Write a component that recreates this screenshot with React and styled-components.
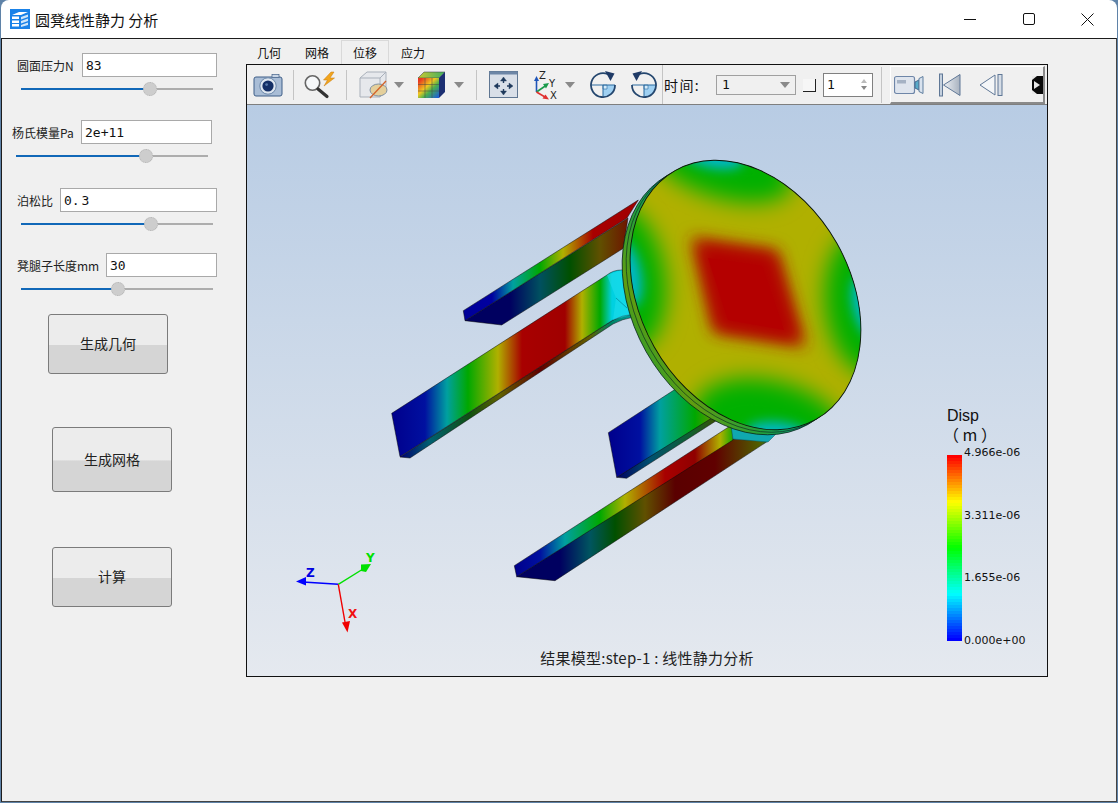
import React from "react";
import styled, { createGlobalStyle } from "styled-components";

const Global = createGlobalStyle`
  html, body { margin: 0; padding: 0; background: #5f83a8; }
  body { font-family: "Noto Sans CJK SC", "Noto Sans", sans-serif; }
`;

const Win = styled.div`
  box-sizing: border-box;
  width: 1118px;
  height: 803px;
  display: flex;
  flex-direction: column;
  padding: 0 1px 1px;
  background: #5f83a8;
`;

const TitleBar = styled.div`
  height: 38px;
  flex: none;
  display: flex;
  align-items: center;
  padding-left: 9px;
  background: #fff;
  border-radius: 8px 8px 0 0;
`;

const Title = styled.div`
  margin-left: 5px;
  font-size: 15px;
  color: #111;
  white-space: pre;
`;

const WinButtons = styled.div`
  margin-left: auto;
  display: flex;
`;

const WinButton = styled.div`
  width: 59px;
  height: 38px;
  display: flex;
  align-items: center;
  justify-content: center;
`;

const Body = styled.div`
  flex: 1;
  display: flex;
  background: #f0f0f0;
  border: 1px solid #1c1c1c;
  border-bottom-color: #444;
  border-right-color: #444;
`;

const Side = styled.div`
  width: 243px;
  flex: none;
  display: flex;
  flex-direction: column;
  padding-top: 14px;
`;

const Param = styled.div`
  width: 200px;
  margin-left: ${(p) => p.$left}px;
  margin-top: ${(p) => p.$top}px;
`;

const ParamRow = styled.div`
  display: flex;
  align-items: center;
  justify-content: space-between;
  height: 24px;
`;

const ParamLabel = styled.div`
  font-size: 12px;
  color: #222;
  white-space: nowrap;
`;

const Field = styled.div`
  box-sizing: border-box;
  width: ${(p) => p.$w}px;
  height: 24px;
  background: #fff;
  border: 1px solid #a9a9a9;
  padding-left: 3px;
  font: 13px/24px "DejaVu Sans Mono", "Liberation Mono", monospace;
  word-spacing: -6px;
  color: #111;
  white-space: pre;
`;

const SliderWrap = styled.div`
  position: relative;
  height: 14px;
  margin: 5px 4px 0;
`;

const Track = styled.div`
  position: absolute;
  left: 0;
  right: 0;
  top: 6px;
  height: 2px;
  background: #adadad;
`;

const TrackFill = styled.div`
  height: 2px;
  background: #1168b8;
`;

const Thumb = styled.div`
  position: absolute;
  top: 0;
  width: 14px;
  height: 14px;
  margin-left: -7px;
  box-sizing: border-box;
  border-radius: 50%;
  background: #cdcdcd;
  border: 1px dotted #b4b4b4;
`;

const ActionButton = styled.div`
  box-sizing: border-box;
  width: 120px;
  height: ${(p) => p.$h}px;
  margin-left: ${(p) => p.$left}px;
  margin-top: ${(p) => p.$top}px;
  padding-bottom: 2px;
  flex: none;
  display: flex;
  align-items: center;
  justify-content: center;
  border: 1px solid #7b7b7b;
  border-radius: 3px;
  background: linear-gradient(#ececec 0, #ececec 51%, #d5d5d5 52%, #d5d5d5 100%);
  font-size: 14px;
  color: #222;
`;

const Main = styled.div`
  flex: 1;
  display: flex;
  flex-direction: column;
  padding-top: 1px;
`;

const Tabs = styled.div`
  display: flex;
  height: 24px;
`;

const Tab = styled.div`
  box-sizing: border-box;
  width: 48px;
  height: 24px;
  font-size: 12px;
  line-height: 23px;
  text-align: center;
  color: #111;
  border: 1px solid ${(p) => (p.$active ? "#d9d9d9" : "transparent")};
  border-bottom: none;
`;

const Frame = styled.div`
  box-sizing: border-box;
  width: 802px;
  height: 613px;
  margin-left: 1px;
  border: 1px solid #111;
  display: flex;
  flex-direction: column;
`;

const Toolbar = styled.div`
  box-sizing: border-box;
  height: 40px;
  flex: none;
  display: flex;
  align-items: center;
  background: #f0f0f0;
  border-bottom: 1px solid #7f7f7f;
  overflow: hidden;
`;

const ToolIcon = styled.svg`
  flex: none;
  display: block;
  margin-left: ${(p) => p.$ml || 0}px;
`;

const Sep = styled.div`
  flex: none;
  width: 1px;
  height: ${(p) => p.$h || 30}px;
  margin-left: ${(p) => p.$ml}px;
  background: #c4c4c4;
`;

const Caret = styled.div`
  flex: none;
  margin-left: ${(p) => p.$ml}px;
  width: 0;
  height: 0;
  border-left: 5px solid transparent;
  border-right: 5px solid transparent;
  border-top: 6px solid #8a8a8a;
`;

const TimeLabel = styled.div`
  flex: none;
  width: 36px;
  margin-left: 1px;
  font-size: 14px;
  letter-spacing: 1.4px;
  white-space: nowrap;
  color: #111;
`;

const Combo = styled.div`
  box-sizing: border-box;
  flex: none;
  width: 80px;
  height: 20px;
  margin-left: 16px;
  padding: 0 5px;
  display: flex;
  align-items: center;
  justify-content: space-between;
  border: 1px solid #a0a0a0;
  font: 13px "DejaVu Sans Mono", monospace;
  color: #111;
`;

const Check = styled.div`
  box-sizing: border-box;
  flex: none;
  width: 13px;
  height: 13px;
  margin-left: 7px;
  margin-top: 2px;
  background: #f6f6f6;
  border-right: 1px solid #222;
  border-bottom: 1px solid #222;
`;

const Spin = styled.div`
  box-sizing: border-box;
  flex: none;
  width: 50px;
  height: 24px;
  margin-left: 7px;
  padding: 0 5px 0 3px;
  display: flex;
  align-items: center;
  justify-content: space-between;
  background: #fff;
  border: 1px solid #808080;
  font: 13px "DejaVu Sans Mono", monospace;
  color: #111;
`;

const SpinArrows = styled.div`
  display: flex;
  flex-direction: column;
  gap: 3px;
`;

const SpinArrow = styled.div`
  width: 0;
  height: 0;
  border-left: 3px solid transparent;
  border-right: 3px solid transparent;
  border-${(p) => (p.$down ? "top" : "bottom")}: 4px solid ${(p) => (p.$down ? "#888" : "#bbb")};
`;

const PlayerBar = styled.div`
  box-sizing: border-box;
  flex: none;
  align-self: flex-start;
  display: flex;
  align-items: center;
  width: 155px;
  height: 38px;
  margin-left: 8px;
  margin-top: 1px;
  border-top: 1px solid #fff;
  border-left: 1px solid #fff;
  border-right: 2px solid #8a8a8a;
  border-bottom: 2px solid #8a8a8a;
  overflow: hidden;
`;

const Canvas = styled.div`
  position: relative;
  flex: 1;
  overflow: hidden;
  background: linear-gradient(#b8cce4, #e5e9ef);
`;

const Scene = styled.svg`
  display: block;
  width: 800px;
  height: 571px;
`;

const Legend = styled.div`
  position: absolute;
  left: 700px;
  top: 302px;
  color: #111;
`;

const LegendTitle = styled.div`
  font: 16px/18px "Liberation Sans", "Noto Sans CJK SC", sans-serif;
  white-space: pre;
`;

const LegendUnit = styled(LegendTitle)`
  margin-left: -4px;
  font-family: "Noto Sans CJK SC", sans-serif;
`;

const LegendBody = styled.div`
  display: flex;
  margin-top: 12px;
`;

const ColorBar = styled.div`
  width: 15px;
  height: 186px;
`;

const Ticks = styled.div`
  margin: -9px 0 -7px 2px;
  display: flex;
  flex-direction: column;
  justify-content: space-between;
`;

const Tick = styled.div`
  font: 11px/14px "DejaVu Sans", sans-serif;
`;

const Caption = styled.div`
  position: absolute;
  left: 0;
  right: 0;
  bottom: 8px;
  font-size: 15px;
  letter-spacing: 0.25px;
  line-height: 20px;
  text-align: center;
  color: #222;
`;

// 颜色条 blue -> cyan -> green -> yellow -> red, banded like the vtk lookup table
function bandColor(t) {
  const hue = (1 - t) * 240;
  return `hsl(${hue} 100% 50%)`;
}

function colorBarCss() {
  const n = 62;
  const parts = [];
  for (let i = 0; i < n; i++) {
    const c = bandColor(1 - i / (n - 1));
    parts.push(`${c} ${(i / n) * 100}% ${((i + 1) / n) * 100}%`);
  }
  return `linear-gradient(${parts.join(",")})`;
}

const BLUE = "#00008c";
const TEAL = "#00a0a0";
const GREEN = "#00a800";
const OLIVE = "#b0b000";
const RED = "#a80000";

function Grad({ id, x1, x2, stops }) {
  return (
    <linearGradient id={id} gradientUnits="userSpaceOnUse" x1={x1} y1={0} x2={x2} y2={0}>
      {stops.map(([x, c]) => (
        <stop key={x} offset={(x - x1) / (x2 - x1)} stopColor={c} />
      ))}
    </linearGradient>
  );
}

const FACE = { cx: 745.5, cy: 295, rx: 143, ry: 105, transform: "rotate(60.5 745.5 295)" };

const SceneText = styled.text`
  font: bold 12px "DejaVu Sans", sans-serif;
`;

function StoolModel() {
  return (
    <g>
      <defs>
        <Grad id="l1top" x1={463} x2={640} stops={[[463, "#000098"], [492, "#0000a0"], [513, TEAL], [540, GREEN], [563, OLIVE], [593, RED], [640, "#a00000"]]} />
        <Grad id="l1side" x1={465} x2={630} stops={[[465, "#000060"], [510, "#000060"], [540, "#005060"], [570, "#005000"], [600, "#605000"], [630, "#701000"]]} />
        <Grad id="l2top" x1={392} x2={632} stops={[[392, BLUE], [425, "#0010a0"], [447, TEAL], [468, GREEN], [498, OLIVE], [522, RED], [565, "#a00000"], [582, OLIVE], [600, GREEN], [612, "#00d0e0"], [632, "#00d8e8"]]} />
        <Grad id="l2side" x1={400} x2={632} stops={[[400, "#000070"], [430, "#006070"], [470, "#105010"], [500, "#606000"], [540, "#600000"], [590, "#606000"], [610, "#008060"], [632, "#00a0a0"]]} />
        <Grad id="l3top" x1={608} x2={720} stops={[[608, BLUE], [640, "#0010a0"], [660, TEAL], [695, GREEN], [720, "#809000"]]} />
        <Grad id="l3side" x1={617} x2={720} stops={[[617, "#000060"], [650, "#005070"], [690, "#106030"], [720, "#405000"]]} />
        <Grad id="l4top" x1={515} x2={735} stops={[[515, BLUE], [540, "#0010a0"], [565, TEAL], [600, GREEN], [625, OLIVE], [665, RED], [695, "#900000"], [720, OLIVE], [735, GREEN]]} />
        <Grad id="l4side" x1={517} x2={775} stops={[[517, "#000060"], [560, "#000060"], [590, "#005560"], [615, "#005000"], [645, "#605000"], [675, "#5a0000"], [715, "#600000"], [760, "#506000"], [775, "#008060"]]} />
        <linearGradient id="rim" gradientUnits="userSpaceOnUse" x1="0" y1="170" x2="0" y2="440">
          <stop offset="0" stopColor="#40902c" />
          <stop offset="0.2" stopColor="#089078" />
          <stop offset="0.42" stopColor="#009898" />
          <stop offset="0.62" stopColor="#20a040" />
          <stop offset="0.8" stopColor="#609c10" />
          <stop offset="0.92" stopColor="#10a040" />
          <stop offset="1" stopColor="#00a8a8" />
        </linearGradient>
        <clipPath id="faceClip">
          <ellipse {...FACE} />
        </clipPath>
        <filter id="blurWide" x="-50%" y="-50%" width="200%" height="200%">
          <feGaussianBlur stdDeviation="11" />
        </filter>
        <filter id="blurRed" x="-40%" y="-40%" width="180%" height="180%">
          <feGaussianBlur stdDeviation="8" />
        </filter>
        <filter id="blurThin" x="-80%" y="-80%" width="260%" height="260%">
          <feGaussianBlur stdDeviation="6" />
        </filter>
      </defs>

      {/* back leg */}
      <polygon points="465,320.7 501.7,325 623.3,248.3 628,218" fill="url(#l1side)" stroke="#0a0a0a" strokeWidth="0.5" />
      <polygon points="463.3,310.7 465,320.7 627,218 638.3,200" fill="url(#l1top)" stroke="#0a0a0a" strokeWidth="0.5" />

      {/* lower leg */}
      <polygon points="516.7,576.7 555,580.7 768,441 733,439" fill="url(#l4side)" stroke="#0a0a0a" strokeWidth="0.5" />
      <polygon points="514.3,565.7 516.7,576.7 733,440 731.7,425" fill="url(#l4top)" stroke="#0a0a0a" strokeWidth="0.5" />
      <polygon points="731,425 745,424 777,433 768,442 733,439" fill="#10a8b0" stroke="#0a5a60" strokeWidth="0.5" />

      {/* middle leg */}
      <polygon points="616.7,477.3 626.7,478.3 720,418.3 715,413" fill="url(#l3side)" stroke="#0a0a0a" strokeWidth="0.5" />
      <polygon points="608.3,432.7 616.7,477.3 716.7,415 676.7,388.3" fill="url(#l3top)" stroke="#0a0a0a" strokeWidth="0.5" />

      {/* front leg */}
      <path d="M400 457 L410 458 L613 324 Q622 319 634 317 L634 314 Q622 315 613 320 Z" fill="url(#l2side)" stroke="#0a0a0a" strokeWidth="0.5" />
      <path d="M391.7 413.3 L400 456.7 L613 320 Q622 315 634 314 L628 275 L622 270 Q613 270 607 275 Z" fill="url(#l2top)" stroke="#0a0a0a" strokeWidth="0.5" />
      <path d="M607 275 L616 298 L613 320 L634 314 L622 270 Z" fill="#20dcec" opacity="0.55" />
      <path d="M616 298 L627 308" fill="none" stroke="#00788a" strokeWidth="0.6" />

      {/* seat */}
      <ellipse {...FACE} fill="url(#rim)" stroke="#062018" strokeWidth="0.7" style={{ translate: "-8px 5px" }} />
      <ellipse {...FACE} fill="none" stroke="#0a2a20" strokeWidth="0.6" style={{ translate: "-4px 2.5px" }} />
      <ellipse {...FACE} fill={OLIVE} />
      <g clipPath="url(#faceClip)">
        <ellipse cx="720" cy="163" rx="75" ry="34" transform="rotate(18 720 163)" fill="#00b000" filter="url(#blurWide)" />
        <ellipse cx="870" cy="303" rx="45" ry="74" transform="rotate(-6 870 303)" fill="#00b000" filter="url(#blurWide)" />
        <ellipse cx="770" cy="425" rx="78" ry="44" transform="rotate(14 770 425)" fill="#00b000" filter="url(#blurWide)" />
        <ellipse cx="620" cy="277" rx="45" ry="76" transform="rotate(-10 620 277)" fill="#00b000" filter="url(#blurWide)" />
        <ellipse cx="712" cy="155" rx="32" ry="13" transform="rotate(12 712 155)" fill="#00b8c8" filter="url(#blurThin)" />
        <ellipse cx="866" cy="307" rx="13" ry="32" transform="rotate(-14 866 307)" fill="#00b8c8" filter="url(#blurThin)" />
        <ellipse cx="778" cy="435" rx="32" ry="13" transform="rotate(6 778 435)" fill="#00b8c8" filter="url(#blurThin)" />
        <ellipse cx="627" cy="273" rx="14" ry="34" transform="rotate(-12 627 273)" fill="#00b8c8" filter="url(#blurThin)" />
        <polygon points="691,237 778,250 806,347 713,333" fill="#b02800" filter="url(#blurRed)" />
        <polygon points="698,244 773,255 799,341 718,328" fill="#b40000" filter="url(#blurRed)" />
        <polygon points="708,258 762,266 784,330 728,320" fill="#b40000" />
      </g>
      <ellipse {...FACE} fill="none" stroke="#08140c" strokeWidth="0.9" />

      {/* triad */}
      <g strokeWidth="1.4" fill="none">
        <path d="M338.3 584.3 L303 582" stroke="#0000ff" />
        <path d="M338.3 584.3 L363 569" stroke="#00e000" />
        <path d="M338.3 584.3 L345 622" stroke="#f00000" />
      </g>
      <polygon points="296,581.5 306,577 306,585.5" fill="#0000ff" />
      <polygon points="361,564.5 371,564 366,572 361,571" fill="#00e000" />
      <polygon points="342,622.5 350,621 347.5,632.5" fill="#f00000" />
      <SceneText x="306" y="576.5" fill="#0000e0">Z</SceneText>
      <SceneText x="366" y="562" fill="#00e000">Y</SceneText>
      <SceneText x="348" y="618" fill="#f01010">X</SceneText>
    </g>
  );
}

const stroke = "#3f5f88";

const CameraIcon = () => (
  <ToolIcon $ml={6} width="30" height="28" viewBox="0 0 30 28">
    <rect x="1" y="6" width="28" height="19" rx="2" fill="#a9bdd6" stroke={stroke} />
    <rect x="19" y="3.5" width="7" height="3" fill="#c9d6e6" stroke={stroke} strokeWidth="0.7" />
    <circle cx="15" cy="15" r="8.2" fill="#dfe7f0" stroke="#6c88aa" />
    <circle cx="15" cy="15" r="5.6" fill="#142f66" />
    <circle cx="13.6" cy="13.6" r="1.4" fill="#5678a8" />
  </ToolIcon>
);

const SearchIcon = () => (
  <ToolIcon $ml={10} width="31" height="28" viewBox="0 0 31 28">
    <circle cx="8.5" cy="12" r="7.2" fill="#f6f8fa" stroke="#666" strokeWidth="1.6" />
    <path d="M14 18 L23 25.5" stroke="#333" strokeWidth="3.2" strokeLinecap="round" />
    <path d="M27 1 L19.5 9 L23.5 9 L20 15 L30.5 7 L26 7 L30 1 Z" fill="#f2a51d" stroke="#c77a10" strokeWidth="0.5" />
  </ToolIcon>
);

const CubeIcon = () => (
  <ToolIcon $ml={12} width="29" height="30" viewBox="0 0 29 30">
    <path d="M1 8 L8 2 L27 2 L27 20 L21 27 L1 27 Z" fill="#e6e8ec" stroke="#a9b0ba" />
    <path d="M1 8 L21 8 L27 2 M21 8 L21 27" fill="none" stroke="#a9b0ba" />
    <ellipse cx="19.5" cy="20" rx="8.5" ry="6" fill="#e4cf9b" stroke="#8090a0" />
    <path d="M11 28 L27 11" stroke="#d2622a" strokeWidth="1.3" />
  </ToolIcon>
);

const ColorCubeIcon = () => (
  <ToolIcon $ml={14} width="28" height="28" viewBox="0 0 28 28">
    <defs>
      <linearGradient id="cc" x1="0" y1="0" x2="1" y2="1">
        <stop offset="0.1" stopColor="#e83820" />
        <stop offset="0.42" stopColor="#f0c820" />
        <stop offset="0.62" stopColor="#48b050" />
        <stop offset="0.95" stopColor="#2060d0" />
      </linearGradient>
      <linearGradient id="ccTop" x1="0" y1="0" x2="1" y2="0">
        <stop offset="0" stopColor="#c8c830" />
        <stop offset="1" stopColor="#40b060" />
      </linearGradient>
    </defs>
    <path d="M0 7 L6 1 L27 1 L21 7 Z" fill="url(#ccTop)" stroke="#334" strokeWidth="0.5" />
    <rect x="0" y="7" width="21" height="20" fill="url(#cc)" />
    <path d="M21 7 L27 1 L27 21 L21 27 Z" fill="#1c2f72" />
    <path d="M7 7 V27 M14 7 V27 M0 13.5 H21 M0 20 H21" stroke="#444" strokeWidth="0.5" />
  </ToolIcon>
);

const FitIcon = () => (
  <ToolIcon $ml={12} width="29" height="27" viewBox="0 0 29 27">
    <rect x="0.5" y="0.5" width="28" height="26" fill="#d9dfe8" stroke="#5f7692" />
    <rect x="0.5" y="0.5" width="28" height="3" fill="#6d86a6" />
    <g fill="#1f3a5c" stroke="#1f3a5c" strokeWidth="1.4">
      <path d="M14.5 9 V12 M14.5 18 V21 M8 15 H11 M18 15 H21" fill="none" />
      <path d="M14.5 6 L11.5 10 H17.5 Z M14.5 24 L11.5 20 H17.5 Z M5 15 L9 12 V18 Z M24 15 L20 12 V18 Z" strokeWidth="0.4" />
    </g>
  </ToolIcon>
);

const AxisText = styled.text`
  font: 10px "DejaVu Sans", sans-serif;
  fill: #222;
`;

const AxesIcon = () => (
  <ToolIcon $ml={16} width="29" height="30" viewBox="0 0 29 30">
    <path d="M2.5 22 V9" stroke="#1f55b8" strokeWidth="1.6" />
    <path d="M2.5 6 L0 11 H5 Z" fill="#1f55b8" />
    <path d="M2.5 22 L12 15.5" stroke="#1a9a4a" strokeWidth="1.6" />
    <path d="M15 13 L9 14 L12 18.5 Z" fill="#1a9a4a" />
    <path d="M2.5 22 L11 27" stroke="#e03030" strokeWidth="1.6" />
    <path d="M15 29.5 L8.5 28.5 L11.5 24.5 Z" fill="#e03030" />
    <AxisText x="5" y="9">Z</AxisText>
    <AxisText x="15" y="17">Y</AxisText>
    <AxisText x="16" y="29">X</AxisText>
  </ToolIcon>
);

// the arc and arrow flip for the second button, the blue quadrant stays lower right
const RotateIcon = ({ flip }) => (
  <ToolIcon $ml={15} width="26" height="28" viewBox="0 0 26 28">
    <path d="M13 14 H25 A12 12 0 0 1 13 26 Z" fill="#9fd0f2" />
    <path d="M17 14 H13 V18 H17 Z" fill="#d4ebfa" stroke="#2a6aa0" strokeWidth="0.6" />
    <path d="M1 14 H25 M13 14 V26" stroke="#2a6aa0" strokeWidth="1" />
    <g transform={flip ? "translate(26 0) scale(-1 1)" : undefined}>
      <path d="M18 3.2 A12 12 0 1 0 25 14" fill="none" stroke="#24466e" strokeWidth="1.8" />
      <path d="M15 0 L24.5 2.5 L20.5 10 Z" fill="#1f3a66" />
    </g>
  </ToolIcon>
);

const VideoIcon = () => (
  <ToolIcon $ml={3} width="30" height="20" viewBox="0 0 30 20">
    <rect x="0.5" y="1.5" width="20" height="17" rx="2" fill="#dfe5ee" stroke="#6e86a8" strokeWidth="1.2" />
    <rect x="3" y="5" width="9" height="3.5" fill="#a5b2c4" />
    <path d="M21 7 L25 5 V15 L21 13 Z" fill="#58aac8" stroke="#47688f" />
    <path d="M25 3.5 L29 1.5 V18.5 L25 16.5 Z" fill="#d8e2ee" stroke="#5f7e9f" />
  </ToolIcon>
);

const FirstIcon = () => (
  <ToolIcon $ml={15} width="22" height="24" viewBox="0 0 22 24">
    <defs>
      <linearGradient id="tri" x1="0" y1="0" x2="1" y2="0">
        <stop offset="0" stopColor="#eef1f5" />
        <stop offset="1" stopColor="#a8b2bf" />
      </linearGradient>
    </defs>
    <rect x="0.5" y="1" width="3" height="22" fill="#c4d0de" stroke="#5f7796" />
    <path d="M4.5 12 L21 1.5 V22.5 Z" fill="url(#tri)" stroke="#5f7796" />
  </ToolIcon>
);

const PrevIcon = () => (
  <ToolIcon $ml={18} width="24" height="22" viewBox="0 0 24 22">
    <path d="M1 11 L16 1 V21 Z" fill="#f4f6f8" stroke="#5f7796" />
    <rect x="19" y="0.5" width="4" height="21" fill="#d6dde6" stroke="#5f7796" />
  </ToolIcon>
);

const NextGlyph = () => (
  <ToolIcon $ml={29} width="13" height="18" viewBox="0 0 13 18">
    <rect width="13" height="18" fill="#0a0a0a" />
    <path d="M0 0 H5 L0 4 Z M0 18 H5 L0 14 Z" fill="#e8e8e8" />
    <path d="M2 5 L8 9 L2 13 Z" fill="#e8e8e8" />
  </ToolIcon>
);

const AppLogo = () => (
  <svg width="20" height="20" viewBox="0 0 20 20" style={{ display: "block" }}>
    <rect width="20" height="20" fill="#1a82e8" />
    <path d="M2 6 L9 3 L18 3 L11 6 Z M2 7.5 H9 V10 H2 Z M2 11.5 H9 V14 H2 Z M2 15 H9 V17.5 H2 Z" fill="#fff" />
    <path d="M11 8 L18 5.5 V8 L11 10.5 Z M11 12 L18 9.5 V12 L11 14.5 Z M11 16 L18 13.5 V16 L11 18 Z" fill="#cfe6fb" />
  </svg>
);

const params = [
  { left: 15, top: 0, label: "圆面压力N", value: "83", w: 135, pct: 67.2 },
  { left: 10, top: 24, label: "杨氏模量Pa", value: "2e+11", w: 131, pct: 67.7 },
  { left: 15, top: 25, label: "泊松比", value: "0. 3", w: 157, pct: 67.7 },
  { left: 15, top: 22, label: "凳腿子长度mm", value: "30", w: 111, pct: 50.5 },
];

function App() {
  return (
    <>
      <Global />
      <Win>
        <TitleBar>
          <AppLogo />
          <Title>圆凳线性静力 分析</Title>
          <WinButtons>
            <WinButton>
              <svg width="12" height="12" viewBox="0 0 12 12"><path d="M0 6.5 H12" stroke="#111" strokeWidth="1" /></svg>
            </WinButton>
            <WinButton>
              <svg width="12" height="12" viewBox="0 0 12 12"><rect x="0.5" y="0.5" width="11" height="11" rx="1.5" fill="none" stroke="#111" /></svg>
            </WinButton>
            <WinButton>
              <svg width="13" height="13" viewBox="0 0 13 13"><path d="M0.5 0.5 L12.5 12.5 M12.5 0.5 L0.5 12.5" stroke="#111" strokeWidth="1" /></svg>
            </WinButton>
          </WinButtons>
        </TitleBar>
        <Body>
          <Side>
            {params.map((p) => (
              <Param key={p.label} $left={p.left} $top={p.top}>
                <ParamRow>
                  <ParamLabel>{p.label}</ParamLabel>
                  <Field $w={p.w}>{p.value}</Field>
                </ParamRow>
                <SliderWrap>
                  <Track>
                    <TrackFill style={{ width: `${p.pct}%` }} />
                  </Track>
                  <Thumb style={{ left: `${p.pct}%` }} />
                </SliderWrap>
              </Param>
            ))}
            <ActionButton $left={46} $top={18} $h={60}>生成几何</ActionButton>
            <ActionButton $left={50} $top={53} $h={65}>生成网格</ActionButton>
            <ActionButton $left={50} $top={55} $h={60}>计算</ActionButton>
          </Side>
          <Main>
            <Tabs>
              <Tab>几何</Tab>
              <Tab>网格</Tab>
              <Tab $active>位移</Tab>
              <Tab>应力</Tab>
            </Tabs>
            <Frame>
              <Toolbar>
                <CameraIcon />
                <Sep $ml={10} />
                <SearchIcon />
                <Sep $ml={11} />
                <CubeIcon />
                <Caret $ml={6} />
                <ColorCubeIcon />
                <Caret $ml={8} />
                <Sep $ml={12} />
                <FitIcon />
                <AxesIcon />
                <Caret $ml={2} />
                <RotateIcon />
                <RotateIcon flip />
                <Sep $ml={5} $h={39} />
                <TimeLabel>时间:</TimeLabel>
                <Combo>
                  1
                  <Caret $ml={0} />
                </Combo>
                <Check />
                <Spin>
                  1
                  <SpinArrows>
                    <SpinArrow />
                    <SpinArrow $down />
                  </SpinArrows>
                </Spin>
                <Sep $ml={8} $h={36} />
                <PlayerBar>
                  <VideoIcon />
                  <FirstIcon />
                  <PrevIcon />
                  <NextGlyph />
                </PlayerBar>
              </Toolbar>
              <Canvas>
                <Scene viewBox="247 105 800 571">
                  <StoolModel />
                </Scene>
                <Legend>
                  <LegendTitle>Disp</LegendTitle>
                  <LegendUnit>（ m ）</LegendUnit>
                  <LegendBody>
                    <ColorBar style={{ background: colorBarCss() }} />
                    <Ticks>
                      <Tick>4.966e-06</Tick>
                      <Tick>3.311e-06</Tick>
                      <Tick>1.655e-06</Tick>
                      <Tick>0.000e+00</Tick>
                    </Ticks>
                  </LegendBody>
                </Legend>
                <Caption>结果模型:step-1 : 线性静力分析</Caption>
              </Canvas>
            </Frame>
          </Main>
        </Body>
      </Win>
    </>
  );
}

export default App;
